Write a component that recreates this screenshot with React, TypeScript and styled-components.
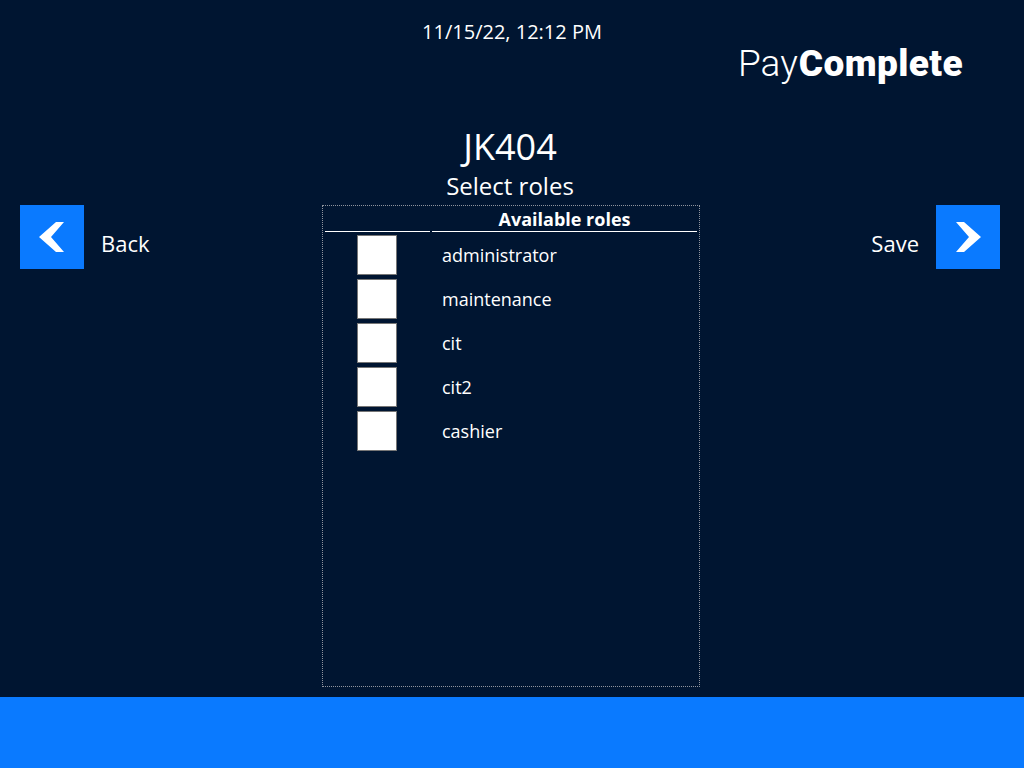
import React from 'react';
import styled, { createGlobalStyle } from 'styled-components';

const GlobalStyle = createGlobalStyle`
  html, body {
    margin: 0;
    padding: 0;
    background: #001531;
  }
`;

const Screen = styled.div`
  width: 1024px;
  height: 768px;
  display: flex;
  flex-direction: column;
  overflow: hidden;
  background: #001531;
  color: #fff;
  font-family: "Open Sans", sans-serif;
`;

const Main = styled.div`
  height: 697px;
  display: grid;
  grid-template-columns: 322px 378px 324px;
`;

const LeftColumn = styled.div`
  padding: 205px 0 0 20px;
`;

const RightColumn = styled.div`
  display: flex;
  flex-direction: column;
  padding-right: 24px;
`;

const NavButton = styled.div<{ $right?: boolean }>`
  display: flex;
  justify-content: ${(p) => (p.$right ? 'flex-end' : 'flex-start')};
  align-items: flex-start;
  gap: 17px;
  font-size: 22px;
  line-height: 30px;
`;

const NavLabel = styled.span`
  padding-top: 23px;
`;

const Arrow = styled.div`
  width: 64px;
  height: 64px;
  background: #0a7aff;
  display: flex;
  align-items: center;
  justify-content: center;
`;

const Center = styled.div`
  display: flex;
  flex-direction: column;
  align-items: center;
`;

const Clock = styled.div`
  margin-top: 20px;
  padding-left: 2px;
  font-size: 20px;
  line-height: 24px;
`;

const Title = styled.h1`
  margin: 79px 2px 0 0;
  font-size: 36px;
  line-height: 48px;
  font-weight: 400;
`;

const Subtitle = styled.h2`
  margin: 0 2px 0 0;
  font-size: 24px;
  line-height: 30px;
  font-weight: 400;
`;

const RolesBox = styled.div`
  width: 378px;
  height: 482px;
  box-sizing: border-box;
  margin-top: 4px;
  border: 1px dotted #8f949e;
  padding: 2px;
`;

const Table = styled.div`
  display: grid;
  grid-template-columns: 105px 265px;
  column-gap: 2px;
`;

const HeadCell = styled.div`
  height: 23px;
  margin-bottom: 1px;
  border-bottom: 1px solid #fff;
  font-size: 18px;
  line-height: 23px;
  font-weight: 700;
  text-align: center;
  white-space: nowrap;
`;

const CheckCell = styled.div`
  height: 44px;
  padding-right: 1px;
  display: flex;
  align-items: center;
  justify-content: center;
`;

const CheckBox = styled.div`
  width: 38px;
  height: 38px;
  background: #fff;
  border: 1px solid #767676;
`;

const RoleName = styled.div`
  height: 44px;
  padding-left: 10px;
  font-size: 18px;
  line-height: 44px;
`;

const Logo = styled.div`
  height: 205px;
  box-sizing: border-box;
  padding: 39px 0 0 38px;
  font-family: "Roboto", sans-serif;
  font-size: 37px;
  line-height: 50px;
  white-space: nowrap;
`;

const LogoLight = styled.span`
  font-weight: 300;
`;

const LogoBold = styled.span`
  margin-left: 1px;
  font-weight: 900;
  letter-spacing: 0.4px;
`;

const BottomBar = styled.div`
  flex: 1;
  background: #0a7aff;
`;

const Chevron = ({ left }: { left?: boolean }) => (
  <svg width="26" height="30" viewBox="0 0 26 30">
    <polygon
      points={left ? '0,15 17,0 25,0 12,15 25,30 17,30' : '1,0 9,0 26,15 9,30 1,30 14,15'}
      fill="#fff"
    />
  </svg>
);

const roles = ['administrator', 'maintenance', 'cit', 'cit2', 'cashier'];

export default function App() {
  return (
    <Screen>
      <GlobalStyle />
      <Main>
        <LeftColumn>
          <NavButton>
            <Arrow><Chevron left /></Arrow>
            <NavLabel>Back</NavLabel>
          </NavButton>
        </LeftColumn>
        <Center>
          <Clock>11/15/22, 12:12 PM</Clock>
          <Title>JK404</Title>
          <Subtitle>Select roles</Subtitle>
          <RolesBox>
            <Table>
              <HeadCell />
              <HeadCell>Available roles</HeadCell>
              {roles.map((role) => (
                <React.Fragment key={role}>
                  <CheckCell><CheckBox /></CheckCell>
                  <RoleName>{role}</RoleName>
                </React.Fragment>
              ))}
            </Table>
          </RolesBox>
        </Center>
        <RightColumn>
          <Logo>
            <LogoLight>Pay</LogoLight>
            <LogoBold>Complete</LogoBold>
          </Logo>
          <NavButton $right>
            <NavLabel>Save</NavLabel>
            <Arrow><Chevron /></Arrow>
          </NavButton>
        </RightColumn>
      </Main>
      <BottomBar />
    </Screen>
  );
}
